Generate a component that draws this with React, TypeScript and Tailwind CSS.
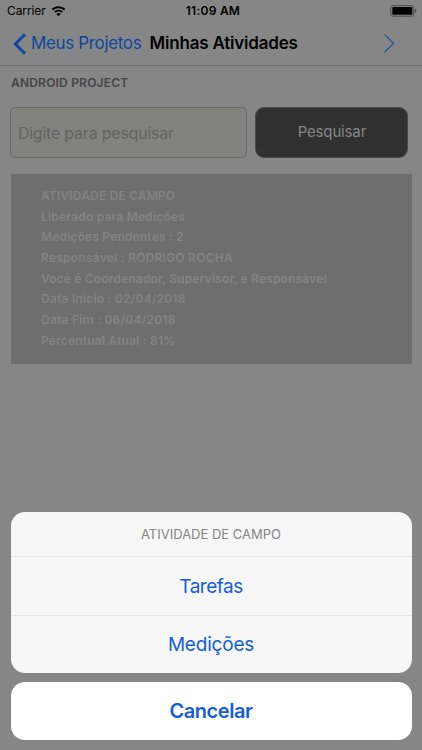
import React from 'react'

const details = [
  { text: 'ATIVIDADE DE CAMPO', style: 'tracking-[0.17px]' },
  { text: 'Liberado para Medições', style: 'tracking-[0.2px]' },
  { text: 'Medições Pendentes : 2', style: 'tracking-[0.17px]' },
  { text: 'Responsável : RODRIGO ROCHA', style: 'tracking-[0.24px]' },
  { text: 'Você é Coordenador, Supervisor, e Responsável', style: 'tracking-[0.17px]' },
  { text: 'Data Início : 02/04/2018', style: 'tracking-[0.22px]' },
  { text: 'Data Fim : 06/04/2018', style: 'tracking-[0.25px]' },
  { text: 'Percentual Atual : 81%', style: 'tracking-[0.2px]' },
]

function StatusBar() {
  return (
    <div className="flex h-[22px] items-center justify-between pl-[7px] pr-[5px] text-black">
      <div className="flex w-[100px] items-center gap-[5.5px]">
        <span className="w-[38.5px] text-[12px] leading-none tracking-[-0.1px]">Carrier</span>
        <svg width="15" height="11" viewBox="0 0 14 11" fill="currentColor">
          <path d="M7 0.3C4.4 0.3 2 1.3 0.2 3L1.5 4.4C3 3 4.9 2.2 7 2.2S11 3 12.5 4.4L13.8 3C12 1.3 9.6 0.3 7 0.3Z" />
          <path d="M7 3.7C5.3 3.7 3.8 4.3 2.6 5.5L3.9 6.8C4.7 6 5.8 5.5 7 5.5S9.3 6 10.1 6.8L11.4 5.5C10.2 4.3 8.7 3.7 7 3.7Z" />
          <path d="M7 7C6.2 7 5.4 7.3 4.8 7.9L7 10.2L9.2 7.9C8.6 7.3 7.8 7 7 7Z" />
        </svg>
      </div>
      <span className="pl-[2px] text-[12px] font-semibold leading-none tracking-[0.25px]">11:09 AM</span>
      <div className="flex w-[100px] justify-end">
        <svg width="27" height="12" viewBox="0 0 27 12">
          <rect x="0.8" y="0.6" width="23" height="10.6" rx="2.2" fill="none" stroke="#4b4b4b" />
          <rect x="2.3" y="2.1" width="20" height="7.6" rx="0.9" fill="black" />
          <path d="M25 4C26.8 4.5 26.8 7.4 25 7.9Z" fill="#4b4b4b" />
        </svg>
      </div>
    </div>
  )
}

function NavBar() {
  return (
    <div className="flex h-[44px] items-center border-b border-[#6e6e6e] pl-[13px] pr-[27px]">
      <button className="flex items-center text-[#0d46a0]">
        <svg width="14" height="22" viewBox="0 0 14 22" fill="none" stroke="currentColor" strokeWidth="3">
          <path d="M12 1.2L2.3 11L12 20.8" />
        </svg>
        <span className="ml-[4px] w-[118.5px] whitespace-nowrap text-left text-[17px] leading-none tracking-[-0.35px]">Meus Projetos</span>
      </button>
      <h1 className="flex-1 whitespace-nowrap text-[17px] font-semibold leading-none tracking-[-0.2px] text-black">Minhas Atividades</h1>
      <svg width="12" height="20" viewBox="0 0 12 20" fill="none" stroke="#2355a6" strokeWidth="1.3">
        <path d="M1.4 0.4L10.6 9.3L1.4 18.2" />
      </svg>
    </div>
  )
}

function ActionSheet() {
  return (
    <div className="absolute bottom-[10.5px] left-[10.5px] right-[10.5px] text-center text-[#145de0]">
      <div className="overflow-hidden rounded-[14px] bg-[#f7f7f7]">
        <div className="flex h-[45px] items-center justify-center border-b border-[#e5e5e6] pt-[2px] text-[13px] text-[#858585]">
          <span>ATIVIDADE DE CAMPO</span>
        </div>
        <button className="flex h-[59px] w-full items-center justify-center border-b border-[#e5e5e6] pt-[4px] text-[19px] tracking-[-0.5px]">Tarefas</button>
        <button className="flex h-[57.5px] w-full items-center justify-center pt-[2.5px] text-[19px] tracking-[-0.2px]">Medições</button>
      </div>
      <button className="mt-[8.5px] flex h-[58px] w-full items-center justify-center rounded-[14px] bg-white text-[20px] font-semibold tracking-[-0.45px]">Cancelar</button>
    </div>
  )
}

function App() {
  return (
    <div className="relative h-[750px] w-[422px] overflow-hidden bg-[#868686] font-['Inter','Liberation_Sans',sans-serif]">
      <StatusBar />
      <NavBar />
      <div className="flex h-[34px] items-center pl-[11px]">
        <h2 className="text-[12px] font-semibold leading-none tracking-[0.2px] text-[#454545]">ANDROID PROJECT</h2>
      </div>
      <div className="flex gap-[8px] pl-[10.4px] pt-[7px]">
        <div className="flex h-[51px] w-[237px] items-center rounded-[5px] border border-[#686868] bg-[#82827f] pl-[6.5px] text-[16px] text-[#626262]">
          <span className="tracking-[-0.22px]">Digite para pesquisar</span>
        </div>
        <button className="flex h-[51px] w-[153px] items-center justify-center rounded-[9px] border border-[#4b4b4b] bg-[#303030] text-[15px] tracking-[-0.15px] text-[#878787]">Pesquisar</button>
      </div>
      <div className="ml-[11px] mr-[10.4px] mt-[16px] h-[190px] bg-[#6e6e6e] pl-[30px] pt-[11.8px] text-[12px] font-semibold leading-[20.7px] text-[#838383]">
        {details.map((line) => (
          <p key={line.text} className={line.style}>{line.text}</p>
        ))}
      </div>
      <ActionSheet />
    </div>
  )
}

export default App
